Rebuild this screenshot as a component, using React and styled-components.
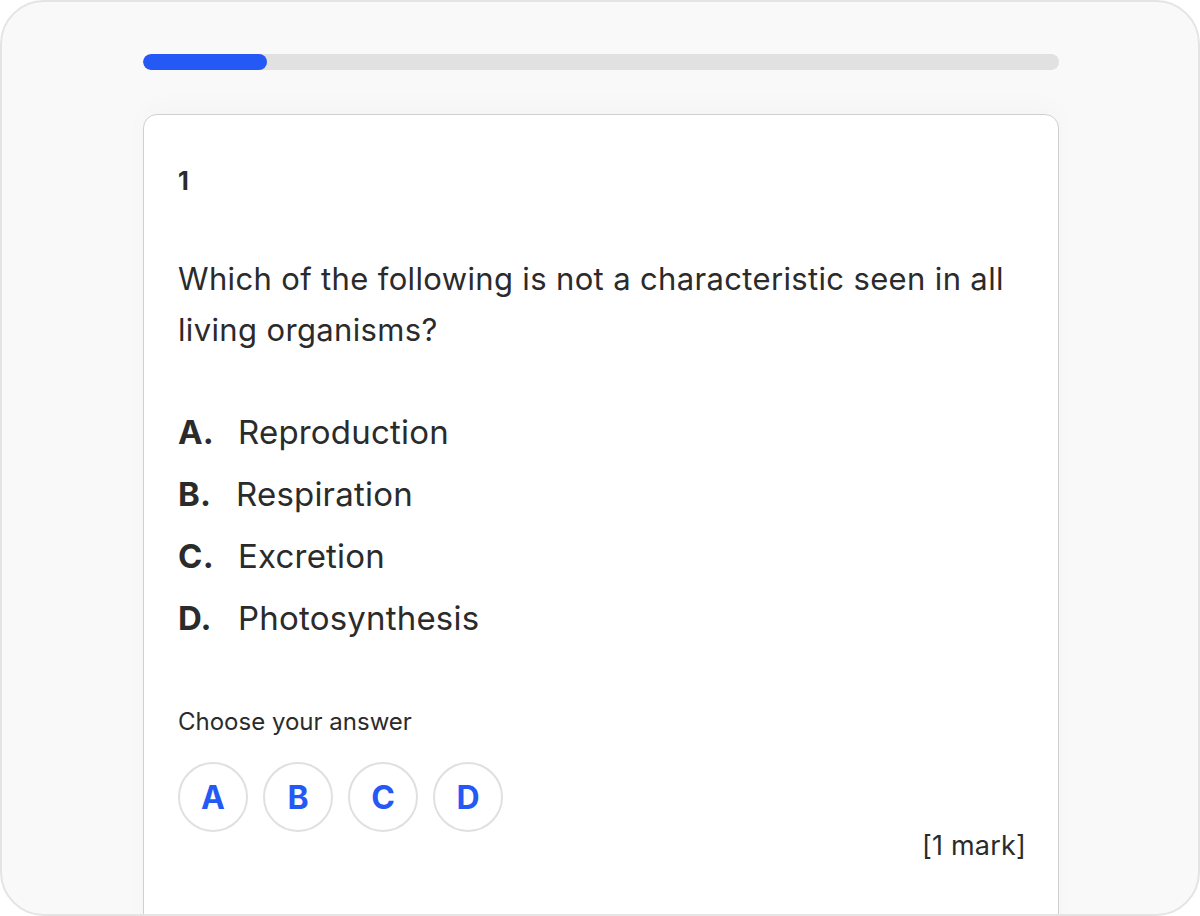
import styled, { createGlobalStyle } from 'styled-components';

const GlobalStyle = createGlobalStyle`
    * { box-sizing: border-box; }
    body {
        margin: 0;
        font-family: Inter, "Noto Sans", sans-serif;
        color: #2b2b2b;
        background: #ffffff;
    }
`;

const StFrame = styled.div`
    width: 1200px;
    height: 916px;
    border: 2px solid #e4e4e4;
    border-radius: 44px;
    background: #f9f9f9;
    overflow: hidden;
    padding: 52px 0 0 141px;
`;

const StTrack = styled.div`
    width: 916px;
    height: 16px;
    border-radius: 8px;
    background: #e1e1e1;
    overflow: hidden;
`;

const StFill = styled.div`
    height: 100%;
    border-radius: 8px;
    background: #2459f5;
`;

const StCard = styled.section`
    width: 916px;
    margin-top: 44px;
    background: #ffffff;
    border: 1px solid #cfcfcf;
    border-radius: 14px;
    box-shadow: 0 -10px 24px rgba(0, 0, 0, 0.02);
    padding: 52px 34px 120px 34px;
    display: flex;
    flex-direction: column;
`;

const StNumber = styled.div`
    font-size: 25px;
    font-weight: 700;
    line-height: 28px;
`;

const StQuestion = styled.p`
    margin: 58px 0 0;
    font-size: 31px;
    line-height: 51px;
    letter-spacing: 0.35px;
    font-weight: 400;
`;

const StOptions = styled.ol`
    list-style: none;
    margin: 57px 0 0;
    padding: 0;
    display: flex;
    flex-direction: column;
    gap: 22px;
`;

const StOption = styled.li`
    font-size: 33px;
    line-height: 40px;
    display: flex;
    letter-spacing: 0.2px;
`;

const StLetter = styled.span`
    font-weight: 700;
    width: ${(p) => p.$width}px;
    flex-shrink: 0;
`;

const StPrompt = styled.div`
    margin-top: 69px;
    font-size: 24px;
    line-height: 30px;
`;

const StChoices = styled.div`
    display: flex;
    gap: 15px;
    margin-top: 25px;
`;

const StChoice = styled.button`
    width: 70px;
    height: 70px;
    border-radius: 50%;
    border: 2px solid #e0e0e0;
    background: #ffffff;
    color: #2459f5;
    font-family: Inter, "Noto Sans", sans-serif;
    font-size: 32px;
    font-weight: 700;
    display: flex;
    align-items: center;
    justify-content: center;
    padding: 0;
    cursor: pointer;
`;

const StMark = styled.div`
    align-self: flex-end;
    font-size: 27px;
    line-height: 34px;
    margin-top: -3px;
    margin-right: -2px;
    letter-spacing: 0.2px;
`;

const options = [
    { key: 'A', label: 'Reproduction', width: 60 },
    { key: 'B', label: 'Respiration', width: 58 },
    { key: 'C', label: 'Excretion', width: 60 },
    { key: 'D', label: 'Photosynthesis', width: 60 },
];

const App = () => {
    const progress = 124;

    return (
        <>
            <GlobalStyle />
            <StFrame>
                <StTrack>
                    <StFill style={{ width: `${progress}px` }} />
                </StTrack>
                <StCard>
                    <StNumber>1</StNumber>
                    <StQuestion>
                        Which of the following is not a characteristic seen in all living organisms?
                    </StQuestion>
                    <StOptions>
                        {options.map((o) => (
                            <StOption key={o.key}>
                                <StLetter $width={o.width}>{o.key}.</StLetter>
                                {o.label}
                            </StOption>
                        ))}
                    </StOptions>
                    <StPrompt>Choose your answer</StPrompt>
                    <StChoices>
                        {options.map((o) => (
                            <StChoice key={o.key}>{o.key}</StChoice>
                        ))}
                    </StChoices>
                    <StMark>[1 mark]</StMark>
                </StCard>
            </StFrame>
        </>
    );
};

export default App;
